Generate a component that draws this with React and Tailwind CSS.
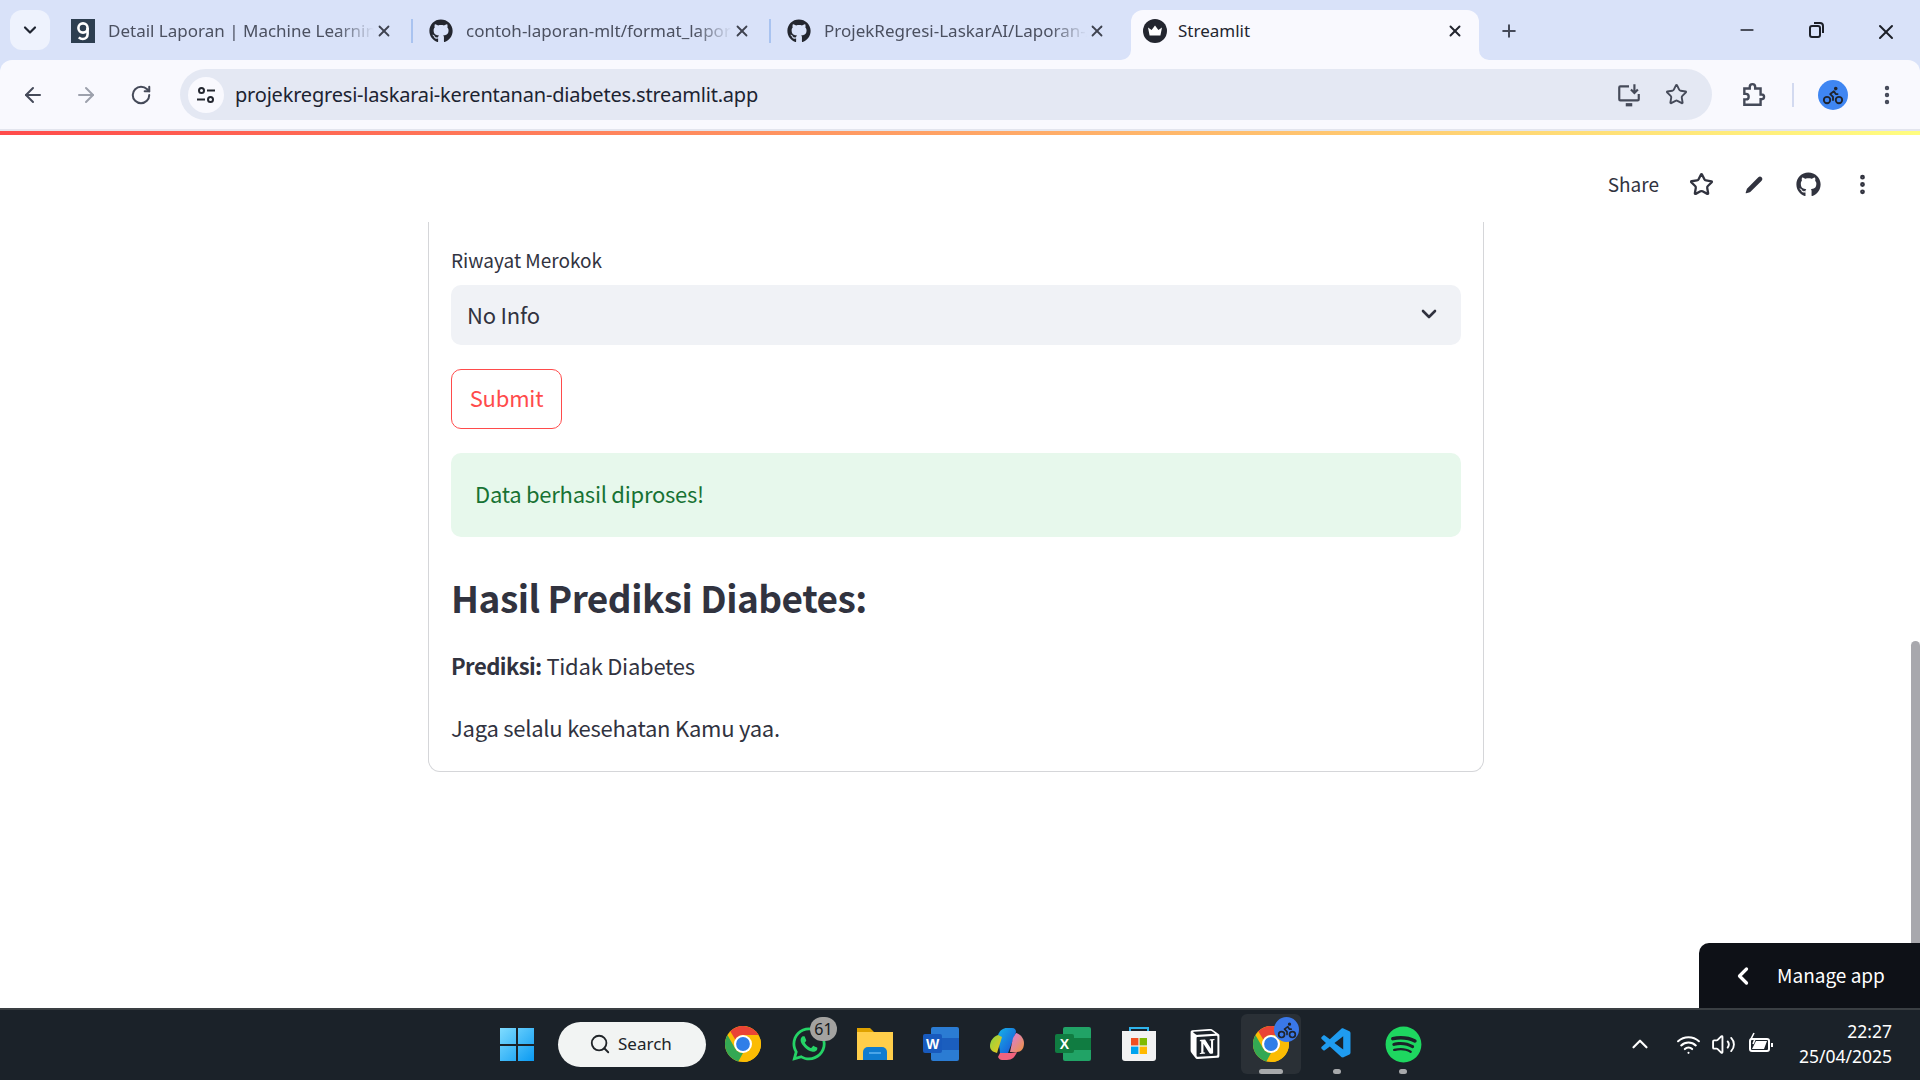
import React from 'react';
import { ArrowLeft, ArrowRight, RotateCw, Star, X, Plus, Minus, ChevronDown, ChevronLeft, ChevronUp, MoreVertical, Search, Pencil, Bike, Wifi, Volume2 } from 'lucide-react';
import { FaGithub, FaWhatsapp, FaSpotify } from 'react-icons/fa';
import { SiNotion } from 'react-icons/si';
import { VscVscode } from 'react-icons/vsc';

const UI = "font-['Noto_Sans',sans-serif]";
const APP = "font-['Noto_Sans_CJK_JP','Noto_Sans',sans-serif]";

function ChromeLogo({ size = 36 }) {
  const d = 'M22.39 6A12 12 0 0 0 3.51 3.51L6.8 9A6 6 0 0 1 12 6Z';
  return (
    <svg width={size} height={size} viewBox="0 0 24 24">
      <circle cx="12" cy="12" r="12" fill="#fbbc04" />
      <path d={d} fill="#ea4335" />
      <path d={d} fill="#fbbc04" transform="rotate(120 12 12)" />
      <path d={d} fill="#34a853" transform="rotate(240 12 12)" />
      <circle cx="12" cy="12" r="6" fill="#fff" />
      <circle cx="12" cy="12" r="4.6" fill="#2f7ee8" />
    </svg>
  );
}

function GFavicon() {
  return (
    <svg width="24" height="24" viewBox="0 0 24 24">
      <rect width="24" height="24" fill="#2d3e50" />
      <circle cx="12" cy="9" r="4.6" fill="none" stroke="#fff" strokeWidth="2.6" />
      <path d="M16.6 9v6c0 3-2 5-4.8 5-1.8 0-3-.6-4-1.6" fill="none" stroke="#fff" strokeWidth="2.6" />
    </svg>
  );
}

function StreamlitFav() {
  return (
    <svg width="24" height="24" viewBox="0 0 24 24">
      <circle cx="12" cy="12" r="12" fill="#23262f" />
      <path d="M5 8.5l3.6 2.6L12 6.5l3.4 4.6L19 8.5l-1.6 8H6.6z" fill="#fff" />
    </svg>
  );
}

function Tab({ icon, title, width, sep = true }) {
  return (
    <div className={`flex items-center h-[50px] pl-[11px] shrink-0 ${width}`}>
      <span className="w-6 h-6 shrink-0 flex items-center justify-center text-[#23262f]">{icon}</span>
      <span className="ml-[13px] flex-1 min-w-0 overflow-hidden whitespace-nowrap text-[17px] text-[#4b5060] [mask-image:linear-gradient(90deg,#000_86%,transparent)]">{title}</span>
      <X size={18} strokeWidth={2.4} className="text-[#3f4350] shrink-0 mx-[1px]" />
      <span className={`w-[2px] h-[24px] ml-[17px] mr-[5px] shrink-0 ${sep ? 'bg-[#a9c3f0]' : 'bg-transparent'}`} />
    </div>
  );
}

function TabStrip() {
  return (
    <div className={`h-[60px] bg-[#d9e2f9] flex items-end shrink-0 ${UI}`}>
      <div className="w-[60px] h-[60px] flex items-start pt-[10px] pl-[10px] shrink-0">
        <div className="w-[40px] h-[40px] rounded-xl bg-[#eef2fd] flex items-center justify-center">
          <ChevronDown size={20} strokeWidth={2.6} className="text-[#1f2430]" />
        </div>
      </div>
      <div className="h-[50px] self-start mt-[6px] flex">
        <Tab width="w-[358px]" icon={<GFavicon />} title="Detail Laporan | Machine Learning" />
        <Tab width="w-[358px]" icon={<FaGithub size={24} />} title="contoh-laporan-mlt/format_laporan" />
        <Tab width="w-[355px]" icon={<FaGithub size={24} />} title="ProjekRegresi-LaskarAI/Laporan-Akhir" sep={false} />
      </div>
      <div className="relative w-[348px] h-[50px] bg-[#f9f9fe] rounded-t-xl flex items-center pl-3 pr-[15px] pb-[8px] shrink-0 self-end">
        <svg className="absolute -left-[10px] bottom-0" width="10" height="10" viewBox="0 0 10 10"><path d="M10 0v10H0a10 10 0 0 0 10-10z" fill="#f9f9fe" /></svg>
        <svg className="absolute -right-[10px] bottom-0" width="10" height="10" viewBox="0 0 10 10"><path d="M0 0v10h10A10 10 0 0 1 0 0z" fill="#f9f9fe" /></svg>
        <StreamlitFav />
        <span className="ml-[11px] flex-1 text-[17px] text-[#23262f]">Streamlit</span>
        <X size={18} strokeWidth={2.6} className="text-[#23262f]" />
      </div>
      <div className="h-[60px] flex items-start pt-[21px] pl-[20px]">
        <Plus size={20} strokeWidth={2.4} className="text-[#454a59]" />
      </div>
      <div className="flex-1" />
      <div className="h-[60px] flex items-start pt-[20px] text-[#1c1f28] pr-[22px]">
        <Minus size={20} strokeWidth={2} className="mr-[49px]" />
        <svg width="20" height="20" viewBox="0 0 20 20" fill="none" stroke="currentColor" strokeWidth="2" className="mr-[48px]">
          <rect x="4" y="6" width="10" height="11" rx="2" />
          <path d="M8 3h6a3 3 0 0 1 3 3v7" />
        </svg>
        <X size={24} strokeWidth={2} />
      </div>
    </div>
  );
}

function Toolbar() {
  return (
    <div className={`h-[71px] bg-[#f9f9fe] rounded-t-xl flex items-center shrink-0 text-[#454a59] border-b-[2px] border-[#e3e5ee] ${UI}`}>
      <ArrowLeft size={24} strokeWidth={2} className="ml-[21px]" />
      <ArrowRight size={24} strokeWidth={2} className="ml-[29px] text-[#9da1ac]" />
      <RotateCw size={22} strokeWidth={2.2} className="ml-[32px]" />
      <div className="ml-[28px] w-[1532px] h-[51px] rounded-full bg-[#e4e8f3] flex items-center pl-[8px] shrink-0">
        <span className="w-[36px] h-[36px] rounded-full bg-[#f9f9fe] flex items-center justify-center">
          <svg width="20" height="20" viewBox="0 0 20 20" fill="none" stroke="#23262f" strokeWidth="2">
            <circle cx="5.5" cy="5.5" r="2.5" /><path d="M11 5.5h8" />
            <circle cx="14.5" cy="14.5" r="2.5" /><path d="M1 14.5h8" />
          </svg>
        </span>
        <span className="ml-[11px] text-[20px] text-[#1c2331] tracking-[-0.2px]">projekregresi-laskarai-kerentanan-diabetes.streamlit.app</span>
        <span className="flex-1" />
        <svg width="26" height="26" viewBox="0 0 24 24" fill="none" stroke="#454a59" strokeWidth="2">
          <path d="M12 4H4a1 1 0 0 0-1 1v11a1 1 0 0 0 1 1h16a1 1 0 0 0 1-1v-5" />
          <path d="M9 21h6" strokeWidth="3" />
          <path d="M17 2v8M13.8 7l3.2 3.2L20.2 7" />
        </svg>
        <Star size={23} strokeWidth={2} className="ml-[23px] mr-[24px]" />
      </div>
      <svg width="26" height="26" viewBox="0 0 24 24" fill="none" stroke="#454a59" strokeWidth="2.2" className="ml-[28px]">
        <path d="M4 6h5V4.5a2.5 2.5 0 0 1 5 0V6h5v5.5h1a2.2 2.2 0 0 1 0 4.4h-1V21H4v-5h1.5a2.5 2.5 0 0 0 0-5H4z" />
      </svg>
      <span className="ml-[26px] w-[2px] h-[24px] bg-[#d3daf0]" />
      <span className="ml-[24px] w-[30px] h-[30px] rounded-full bg-[#3f86f2] flex items-center justify-center">
        <Bike size={22} strokeWidth={2} className="text-[#20242c]" />
      </span>
      <MoreVertical size={24} strokeWidth={2.4} className="ml-[27px]" />
    </div>
  );
}

function Page() {
  return (
    <div className={`relative flex-1 min-h-0 bg-white overflow-hidden ${APP}`}>
      <div className="h-[87px] pt-[12px] flex items-center justify-end pr-[45px] text-[#31333f]">
        <span className="text-[19px] mr-[30px]">Share</span>
        <Star size={25} strokeWidth={2.2} className="mr-[30px]" />
        <Pencil size={20} strokeWidth={0} fill="currentColor" className="mr-[32px]" />
        <FaGithub size={25} className="mr-[29px]" />
        <MoreVertical size={25} strokeWidth={2.6} />
      </div>
      <div className="ml-[428px] w-[1056px] h-[550px] border-x border-b border-[#d5d6d9] rounded-b-[12px] px-[22px] pt-[20px]">
        <div className="text-[19px] leading-[36px] text-[#31333f]">Riwayat Merokok</div>
        <div className="mt-[7px] h-[60px] rounded-[10px] bg-[#f0f2f6] flex items-center justify-between pl-4 pr-4 pb-[2px] text-[#31333f] text-[22px] tracking-[-0.2px]">
          <span>No Info</span>
          <ChevronDown size={24} strokeWidth={2.6} className="mr-[4px]" />
        </div>
        <button className="mt-[24px] block h-[60px] w-[111px] rounded-[10px] border border-[#ff4b4b] bg-white pb-[3px] text-[#ff4b4b] text-[22px] tracking-[-0.2px]">Submit</button>
        <div className="mt-[24px] h-[84px] rounded-[10px] bg-[#e7f8ec] flex items-center pl-[24px] pb-[3px] text-[22px] tracking-[-0.25px] text-[#177233]">Data berhasil diproses!</div>
        <h3 className="mt-[28px] text-[37px] leading-[64px] font-bold tracking-[-0.5px] text-[#31333f]">Hasil Prediksi Diabetes:</h3>
        <p className="mt-[18px] text-[22px] leading-[36px] tracking-[-0.25px] text-[#31333f]"><strong className="font-bold tracking-[-0.55px]">Prediksi:</strong> Tidak Diabetes</p>
        <p className="mt-[26px] text-[22px] leading-[36px] tracking-[-0.25px] text-[#31333f]">Jaga selalu kesehatan Kamu yaa.</p>
      </div>
      <div className="absolute right-0 bottom-[60px] w-[9px] h-[307px] bg-[#a8a8ad] rounded-t-full" />
      <div className="absolute right-0 bottom-0 w-[221px] h-[65px] bg-[#0e1117] rounded-tl-[10px] flex items-center text-white text-[19px]">
        <ChevronLeft size={28} strokeWidth={2.8} className="ml-[30px]" />
        <span className="ml-[20px]">Manage app</span>
      </div>
    </div>
  );
}

function WinLogo() {
  return (
    <svg width="36" height="36" viewBox="0 0 36 36">
      <defs>
        <linearGradient id="wg" x1="0" y1="0" x2="1" y2="1"><stop offset="0" stopColor="#7fdcff" /><stop offset="1" stopColor="#0a9af2" /></linearGradient>
      </defs>
      <path d="M1 2h16v16H1zM19 2h16v16H19zM1 20h16v15H1zM19 20h16v15H19z" fill="url(#wg)" />
    </svg>
  );
}

function Folder() {
  return (
    <svg width="38" height="36" viewBox="0 0 38 36">
      <path d="M1 2h13l4 4h19v8H1z" fill="#dfa200" />
      <path d="M1 6h36v28H1z" fill="#ffce4a" />
      <path d="M7 34V26a5 5 0 0 1 5-5h14a5 5 0 0 1 5 5v8z" fill="#0f7ccf" />
      <path d="M13 27h12" stroke="#5ab0ef" strokeWidth="1.6" />
    </svg>
  );
}

function Office({ main, sq, sh, letter }) {
  return (
    <svg width="36" height="34" viewBox="0 0 36 34">
      <rect x="8" width="28" height="34" rx="2" fill={main} />
      <rect x="8" y="11" width="28" height="12" fill={sh} />
      <rect y="7" width="19" height="19" rx="2" fill={sq} />
      <text x="9.5" y="22" textAnchor="middle" fontSize="14" fontWeight="700" fill="#fff" fontFamily="Liberation Sans">{letter}</text>
    </svg>
  );
}

function Copilot() {
  return (
    <svg width="36" height="34" viewBox="0 0 36 34">
      <defs>
        <linearGradient id="c1" x1="0" y1="0" x2="1" y2="1"><stop offset="0" stopColor="#16b3e8" /><stop offset="1" stopColor="#1a4fd6" /></linearGradient>
        <linearGradient id="c2" x1="0" y1="0" x2="1" y2="1"><stop offset="0" stopColor="#d67ae8" /><stop offset="1" stopColor="#f0943c" /></linearGradient>
        <linearGradient id="c3" x1="0" y1="0" x2="1" y2="1"><stop offset="0" stopColor="#86d645" /><stop offset="1" stopColor="#f5c518" /></linearGradient>
      </defs>
      <path d="M9 8c2-5 5-7 9-7h5c3 0 4 2 4 4L19 26H11z" fill="url(#c1)" />
      <path d="M27 6c4 1 8 5 8 10 0 6-3 9-7 9h-7l3-14z" fill="url(#c2)" />
      <path d="M9 8C4 10 1 14 1 19c0 4 3 6 7 7l5-16z" fill="url(#c3)" />
      <path d="M11 26h11l6-1c-2 5-5 8-10 8h-5c-2 0-3-1-4-3z" fill="#f2637e" />
    </svg>
  );
}

function Store() {
  return (
    <svg width="36" height="36" viewBox="0 0 36 36">
      <path d="M9 6V2h18v4" fill="none" stroke="#2fb4ec" strokeWidth="2" />
      <path d="M1 5h34v27a3 3 0 0 1-3 3H4a3 3 0 0 1-3-3z" fill="#f2f2f2" />
      <rect x="10" y="12" width="7.4" height="7.4" fill="#f25022" />
      <rect x="18.6" y="12" width="7.4" height="7.4" fill="#7fba00" />
      <rect x="10" y="20.6" width="7.4" height="7.4" fill="#00a4ef" />
      <rect x="18.6" y="20.6" width="7.4" height="7.4" fill="#ffb900" />
    </svg>
  );
}

function TaskIcon({ children, active, dot }) {
  return (
    <div className={`relative h-[60px] flex items-center justify-center shrink-0 rounded-md ${active ? 'w-[60px] mx-[3px] bg-[#2a3036]' : 'w-[66px]'}`}>
      {children}
      {dot && <span className={`absolute bottom-0 left-1/2 -translate-x-1/2 h-[5px] rounded-full bg-[#a7a9ab] ${active ? 'w-[24px]' : 'w-[8px]'}`} />}
    </div>
  );
}

function Taskbar() {
  return (
    <div className={`h-[72px] bg-[#1b2229] border-t-2 border-[#3a3f43] pb-[2px] flex items-center shrink-0 text-white relative ${UI}`}>
      <div className="ml-[499px] w-[36px] flex justify-center mr-[23px]"><WinLogo /></div>
      <div className="w-[148px] h-[45px] rounded-full bg-[#f2f4f3] flex items-center text-[#202428] text-[17px] pl-[31px] mr-[4px]">
        <Search size={22} strokeWidth={2} />
        <span className="ml-[7px]">Search</span>
      </div>
      <TaskIcon><ChromeLogo /></TaskIcon>
      <TaskIcon>
        <FaWhatsapp size={38} className="text-[#25d366]" />
        <span className="absolute top-[3px] right-[5px] w-[27px] h-[24px] rounded-full bg-[#a3a2a0] text-[#16191c] text-[16px] leading-[24px] text-center">61</span>
      </TaskIcon>
      <TaskIcon><Folder /></TaskIcon>
      <TaskIcon><Office main="#2b7cd3" sq="#185abd" sh="#1b5ebe" letter="W" /></TaskIcon>
      <TaskIcon><Copilot /></TaskIcon>
      <TaskIcon><Office main="#21a366" sq="#107c41" sh="#107c41" letter="X" /></TaskIcon>
      <TaskIcon><Store /></TaskIcon>
      <TaskIcon><SiNotion size={30} className="text-white" /></TaskIcon>
      <TaskIcon active dot>
        <ChromeLogo />
        <span className="absolute top-[3px] right-[2px] w-[25px] h-[25px] rounded-full bg-[#3a78e8] flex items-center justify-center">
          <Bike size={20} strokeWidth={2} className="text-[#20242c]" />
        </span>
      </TaskIcon>
      <TaskIcon dot><VscVscode size={36} className="text-[#1f9cf0]" /></TaskIcon>
      <TaskIcon dot><FaSpotify size={37} className="text-[#1ed760]" /></TaskIcon>
      <div className="flex-1" />
      <ChevronUp size={26} strokeWidth={2} className="mr-[23px]" />
      <Wifi size={25} strokeWidth={2} className="mr-[10px]" />
      <Volume2 size={25} strokeWidth={1.8} className="mr-[12px]" />
      <svg width="26" height="24" viewBox="0 0 26 24" fill="none" stroke="#fff" strokeWidth="2" className="mr-[25px]">
        <rect x="2" y="7" width="19" height="12" rx="2" />
        <path d="M24 11v4" />
        <path d="M4 17h12l3-8H8z" fill="#fff" stroke="none" />
        <path d="M6 1L3 7h4l-2 5" strokeWidth="1.6" />
      </svg>
      <div className="text-right text-[17.5px] leading-[25px] mr-[28px]">
        <div>22:27</div>
        <div>25/04/2025</div>
      </div>
    </div>
  );
}

export default function App() {
  return (
    <div className="w-[1920px] h-[1080px] flex flex-col overflow-hidden bg-[#d9e2f9]">
      <TabStrip />
      <Toolbar />
      <div className="h-[4px] shrink-0 bg-[linear-gradient(90deg,#ff4b4b,#fffd80)]" />
      <Page />
      <Taskbar />
    </div>
  );
}
